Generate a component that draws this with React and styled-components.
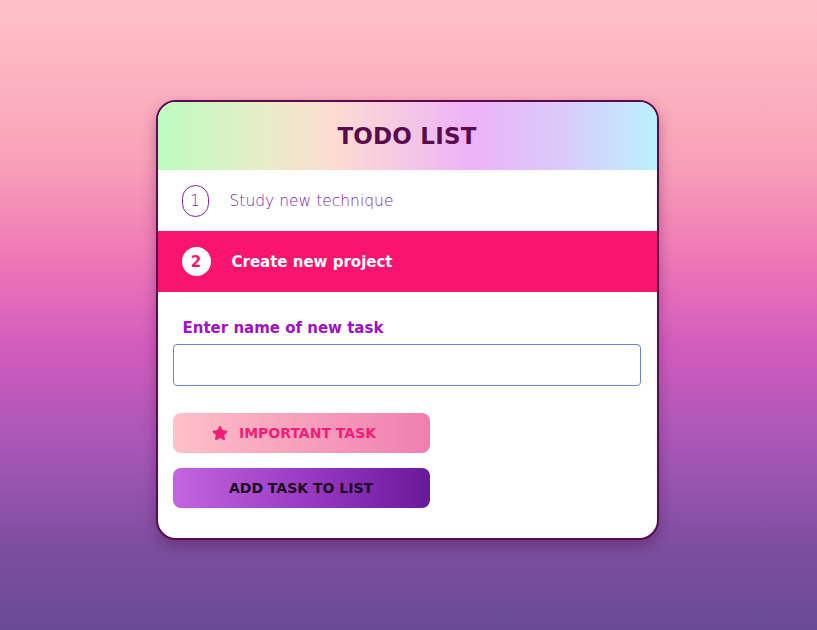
import React from "react";
import styled, { createGlobalStyle } from "styled-components";
import { FaStar } from "react-icons/fa";

const Global = createGlobalStyle`
  html, body { margin: 0; padding: 0; }
  body {
    font-family: "DejaVu Sans", "Liberation Sans", sans-serif;
    background: linear-gradient(180deg, #ffc2c8 0%, #f9a2b8 25%, #ee74b6 42%, #d25cbe 55%, #a456b6 72%, #7a4e9e 88%, #6a4a94 100%);
    min-height: 630px;
  }
`;

const Page = styled.div`
  min-height: 630px;
  box-sizing: border-box;
  padding: 100px 3px 0 0;
  display: flex;
  justify-content: center;
  align-items: flex-start;
`;

const Card = styled.div`
  width: 503px;
  box-sizing: border-box;
  background: #fff;
  border: 2px solid #5a0b4d;
  border-radius: 20px;
  overflow: hidden;
  box-shadow: 0 6px 14px rgba(60, 10, 60, 0.35);
`;

const Header = styled.div`
  height: 68px;
  display: flex;
  align-items: center;
  justify-content: center;
  background: linear-gradient(90deg, #bdfcc0 0%, #e9ecc8 22%, #fddcd2 35%, #f2c4e8 52%, #eeb2f8 62%, #dcc8fa 80%, #bcf0ff 100%);
`;

const Title = styled.h1`
  margin: 0;
  font-size: 23px;
  font-weight: 700;
  color: #5a0b4d;
  letter-spacing: 0.2px;
`;

const Row = styled.div`
  height: 61px;
  display: flex;
  align-items: center;
  padding-left: 24px;
  gap: 21px;
  background: ${(p) => (p.$active ? "#fa1470" : "#fff")};
`;

const Num = styled.span`
  box-sizing: border-box;
  display: flex;
  align-items: center;
  justify-content: center;
  width: ${(p) => (p.$active ? "29px" : "27px")};
  height: ${(p) => (p.$active ? "29px" : "32px")};
  border-radius: 16px;
  border: ${(p) => (p.$active ? "none" : "1px solid #8a1ab8")};
  background: ${(p) => (p.$active ? "#fff" : "transparent")};
  color: ${(p) => (p.$active ? "#fa1470" : "#8a1ab8")};
  font-size: 15px;
  font-weight: ${(p) => (p.$active ? 700 : 300)};
`;

const TaskText = styled.span`
  font-size: ${(p) => (p.$active ? "15px" : "15.5px")};
  font-weight: ${(p) => (p.$active ? 700 : 300)};
  color: ${(p) => (p.$active ? "#fff" : "#8420b0")};
`;

const Form = styled.div`
  padding: 27px 16px 30px 15px;
  display: flex;
  flex-direction: column;
`;

const Label = styled.label`
  font-size: 15px;
  font-weight: 700;
  color: #a010c4;
  padding-left: 10px;
  margin-bottom: 7px;
`;

const Input = styled.input`
  box-sizing: border-box;
  height: 42px;
  width: 100%;
  border: 1px solid #6a84d8;
  border-radius: 4px;
  outline: none;
  margin-bottom: 27px;
`;

const Button = styled.button`
  box-sizing: border-box;
  width: 257px;
  height: 40px;
  border: none;
  border-radius: 8px;
  display: flex;
  align-items: center;
  justify-content: center;
  gap: 11px;
  padding: 0 ${(p) => (p.$variant === "important" ? "14px" : "0")} 0 0;
  font-family: inherit;
  font-size: 14px;
  font-weight: 700;
  text-transform: uppercase;
  background: ${(p) =>
    p.$variant === "important"
      ? "linear-gradient(90deg, #ffc0c8 0%, #f6a0bc 50%, #f07eb2 100%)"
      : "linear-gradient(90deg, #c464e0 0%, #9a3cc4 50%, #6a189a 100%)"};
  color: ${(p) => (p.$variant === "important" ? "#f41c78" : "#1c0a24")};
  & + & { margin-top: 15px; }
`;

export default function App() {
  return (
    <>
      <Global />
      <Page>
        <Card>
          <Header>
            <Title>TODO LIST</Title>
          </Header>
          <Row>
            <Num>1</Num>
            <TaskText>Study new technique</TaskText>
          </Row>
          <Row $active>
            <Num $active>2</Num>
            <TaskText $active>Create new project</TaskText>
          </Row>
          <Form>
            <Label>Enter name of new task</Label>
            <Input type="text" />
            <Button $variant="important">
              <FaStar size={16} />
              Important task
            </Button>
            <Button $variant="add">Add task to list</Button>
          </Form>
        </Card>
      </Page>
    </>
  );
}
